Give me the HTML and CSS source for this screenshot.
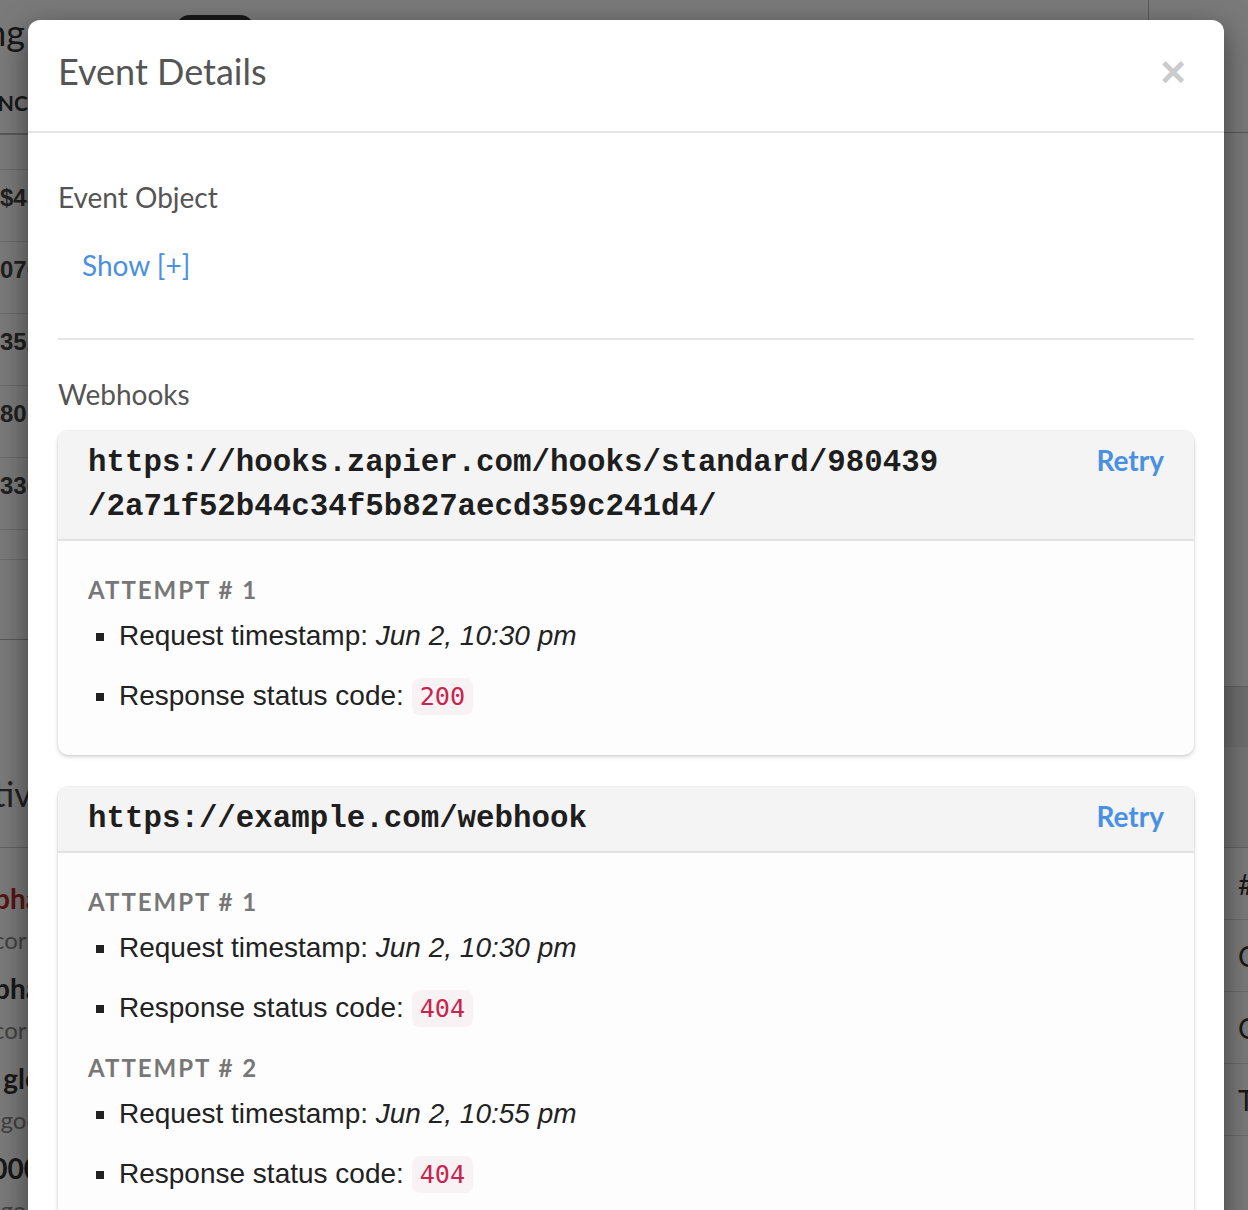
FILE: index.html
```html
<!DOCTYPE html>
<html lang="en">
<head>
<meta charset="utf-8">
<title>Event Details</title>
<link rel="stylesheet" href="styles.css">
</head>
<body>
<div class="page">
  <div class="bg-left">
    <div class="bg-row bg-h1">Pending</div>
    <div class="bg-row bg-th">Balance</div>
    <div class="bg-row bg-sub"></div>
    <div class="bg-row bg-td">$45</div>
    <div class="bg-row bg-td">070</div>
    <div class="bg-row bg-td">352</div>
    <div class="bg-row bg-td">801</div>
    <div class="bg-row bg-td">336</div>
    <div class="bg-row bg-foot1"></div>
    <div class="bg-row bg-foot2"></div>
    <div class="bg-row bg-h2">tivi</div>
    <div class="bg-list">
      <div class="bg-row bg-name red">bha</div>
      <div class="bg-row bg-meta">corn</div>
      <div class="bg-row bg-name">bha</div>
      <div class="bg-row bg-meta">corn</div>
      <div class="bg-row bg-name">gle</div>
      <div class="bg-row bg-meta">agoo</div>
      <div class="bg-row bg-name">000</div>
      <div class="bg-row bg-meta">agoo</div>
    </div>
  </div>
  <div class="bg-main">
    <div class="bg-pill"></div>
  </div>
  <div class="bg-right">
    <div class="bg-r-top"></div>
    <div class="bg-r-band"></div>
    <div class="bg-r-head"></div>
    <div class="bg-r-row">#</div>
    <div class="bg-r-row">C</div>
    <div class="bg-r-row">C</div>
    <div class="bg-r-row">T</div>
  </div>
</div>

<div class="backdrop"></div>

<div class="modal">
  <div class="modal-header">
    <h3 class="modal-title">Event Details</h3>
    <button class="close" type="button">×</button>
  </div>
  <div class="modal-body">
    <h4 class="section-title">Event Object</h4>
    <div class="toggle"><a class="show-link">Show [+]</a></div>
    <hr class="divider">
    <h4 class="section-title">Webhooks</h4>

    <div class="hook-card">
      <div class="hook-header">
        <div class="hook-url">https://hooks.zapier.com/hooks/standard/980439<wbr>/2a71f52b44c34f5b827aecd359c241d4/</div>
        <a class="retry">Retry</a>
      </div>
      <div class="hook-body">
        <div class="attempt-title">Attempt # 1</div>
        <ul class="attempt-list">
          <li>Request timestamp: <em>Jun 2, 10:30 pm</em></li>
          <li>Response status code: <code>200</code></li>
        </ul>
      </div>
    </div>

    <div class="hook-card">
      <div class="hook-header">
        <div class="hook-url">https://example.com/webhook</div>
        <a class="retry">Retry</a>
      </div>
      <div class="hook-body">
        <div class="attempt-title">Attempt # 1</div>
        <ul class="attempt-list">
          <li>Request timestamp: <em>Jun 2, 10:30 pm</em></li>
          <li>Response status code: <code>404</code></li>
        </ul>
        <div class="attempt-title">Attempt # 2</div>
        <ul class="attempt-list">
          <li>Request timestamp: <em>Jun 2, 10:55 pm</em></li>
          <li>Response status code: <code>404</code></li>
        </ul>
      </div>
    </div>
  </div>
</div>
</body>
</html>
```

FILE: styles.css
```css
* { box-sizing: border-box; }

html, body {
  margin: 0;
  height: 1210px;
  overflow: hidden;
}

body {
  position: relative;
  background: #fff;
  font-family: "Liberation Sans", Arial, sans-serif;
}

/* ---------- background page (dimmed) ---------- */
.page {
  display: grid;
  grid-template-columns: 40px 1fr 100px;
  height: 1210px;
  font-family: Lato, "Liberation Sans", sans-serif;
  color: #333;
}

.bg-left { display: flex; flex-direction: column; }

.bg-row {
  display: flex;
  justify-content: flex-end;
  white-space: nowrap;
}

.bg-h1 { height: 56px; padding: 8px 15px 0 0; font-size: 36px; line-height: 48px; }
.bg-th {
  height: 79px; align-items: flex-end; padding-bottom: 20px;
  font-size: 21px; line-height: 20px; font-weight: 700; text-transform: uppercase;
  border-bottom: 2px solid #bbb;
}
.bg-sub { height: 35px; border-bottom: 1px solid #ddd; }
.bg-td {
  height: 72px; padding-top: 13px;
  font-family: "Liberation Sans", Arial, sans-serif;
  font-size: 24px; line-height: 30px; font-weight: 700; color: #444;
  border-bottom: 1px solid #ddd;
}
.bg-foot1 { height: 30px; border-bottom: 1px solid #ddd; }
.bg-foot2 { height: 80px; border-bottom: 1px solid #bbb; }
.bg-h2 {
  height: 208px; align-items: flex-end; padding-bottom: 28px;
  font-family: Lato, sans-serif; font-weight: 400;
  font-size: 34px; line-height: 50px; color: #444;
  border-bottom: 1px solid #ccc;
}
.bg-list { display: flex; flex-direction: column; padding-top: 26px; }
.bg-name {
  height: 48px; align-items: center;
  font-size: 28px; font-weight: 700; color: #333;
}
.bg-name.red { color: #b52a2a; }
.bg-meta { height: 42px; line-height: 36px; font-size: 24px; color: #888; }

.bg-main { display: flex; align-items: flex-start; }
.bg-pill {
  margin: 15px 0 0 135px;
  width: 80px; height: 30px;
  border-radius: 15px;
  background: #333;
}

.bg-right {
  display: flex; flex-direction: column;
  border-left: 1px solid #bbb;
}
.bg-r-top { height: 133px; border-bottom: 1px solid #bbb; }
.bg-r-band { height: 554px; border-bottom: 1px solid #ccc; }
.bg-r-head { height: 161px; background: #f2f2f2; border-top: 60px solid #e6e6e6; border-bottom: 1px solid #ccc; }
.bg-r-row {
  height: 72px; padding-left: 89px;
  font-size: 28px; line-height: 72px; color: #333;
  border-bottom: 1px solid #ddd;
}

.backdrop {
  position: absolute;
  inset: 0;
  background: rgba(0, 0, 0, 0.52);
  z-index: 1;
}

/* ---------- modal ---------- */
.modal {
  position: absolute;
  left: 28px;
  top: 20px;
  width: 1196px;
  height: 1280px;
  background: #fff;
  border-radius: 12px;
  box-shadow: 0 10px 30px rgba(0, 0, 0, 0.5);
  z-index: 2;
}

.modal-header {
  display: flex;
  justify-content: space-between;
  align-items: flex-start;
  padding: 30px;
  border-bottom: 2px solid #e5e5e5;
}

.modal-title {
  margin: -4px 0 4px;
  font-family: Lato, sans-serif;
  font-weight: 400;
  font-size: 36px;
  line-height: 51px;
  color: #555;
}

.close {
  border: 0;
  background: none;
  padding: 0;
  margin: 0 8px 0 0;
  font-family: "Liberation Sans", Arial, sans-serif;
  font-weight: 700;
  font-size: 44px;
  line-height: 1;
  color: #000;
  opacity: 0.2;
}

.modal-body { padding: 30px; }

.section-title {
  margin: 19px 0 22px;
  font-family: Lato, sans-serif;
  font-weight: 400;
  font-size: 28px;
  line-height: 30px;
  color: #555;
}

.toggle { padding: 11px 0 0 24px; }

.show-link {
  font-family: Lato, sans-serif;
  font-size: 28px;
  line-height: 40px;
  color: #4a90e2;
}

.divider {
  margin: 53px 0 39px;
  border: 0;
  border-top: 2px solid #e5e5e5;
  height: 0;
}

/* ---------- webhook cards ---------- */
.hook-card {
  background: #fdfdfd;
  border-radius: 10px;
  overflow: hidden;
  margin-bottom: 32px;
  box-shadow: 0 0 0 1px rgba(0, 0, 0, 0.04), 0 2px 4px rgba(0, 0, 0, 0.16);
}

.hook-header {
  display: flex;
  justify-content: space-between;
  align-items: flex-start;
  padding: 10px 30px 10px;
  background: #f4f4f4;
  border-bottom: 2px solid #e2e2e2;
}

.hook-url {
  width: 860px;
  font-family: "Liberation Mono", "Courier New", monospace;
  font-weight: 700;
  font-size: 30.8px;
  line-height: 44px;
  color: #1e1e1e;
}

.retry {
  margin-top: -3px;
  font-family: Lato, sans-serif;
  font-weight: 700;
  font-size: 28px;
  line-height: 44px;
  color: #4a90e2;
}

.hook-body { padding: 30px 30px 18px; }

.attempt-title {
  font-family: Lato, sans-serif;
  font-weight: 700;
  font-size: 24px;
  line-height: 38px;
  letter-spacing: 2px;
  text-transform: uppercase;
  color: #777;
}

.attempt-list {
  list-style: square;
  margin: 7px 0 5px;
  padding-left: 31px;
}

.attempt-list li {
  font-family: "Liberation Sans", Arial, sans-serif;
  font-size: 28px;
  line-height: 40px;
  color: #222;
  margin-bottom: 20px;
}

.attempt-list code {
  font-family: "DejaVu Sans Mono", monospace;
  font-size: 25.2px;
  padding: 4px 8px;
  background: #f9f2f4;
  color: #c7254e;
  border-radius: 8px;
}
```
